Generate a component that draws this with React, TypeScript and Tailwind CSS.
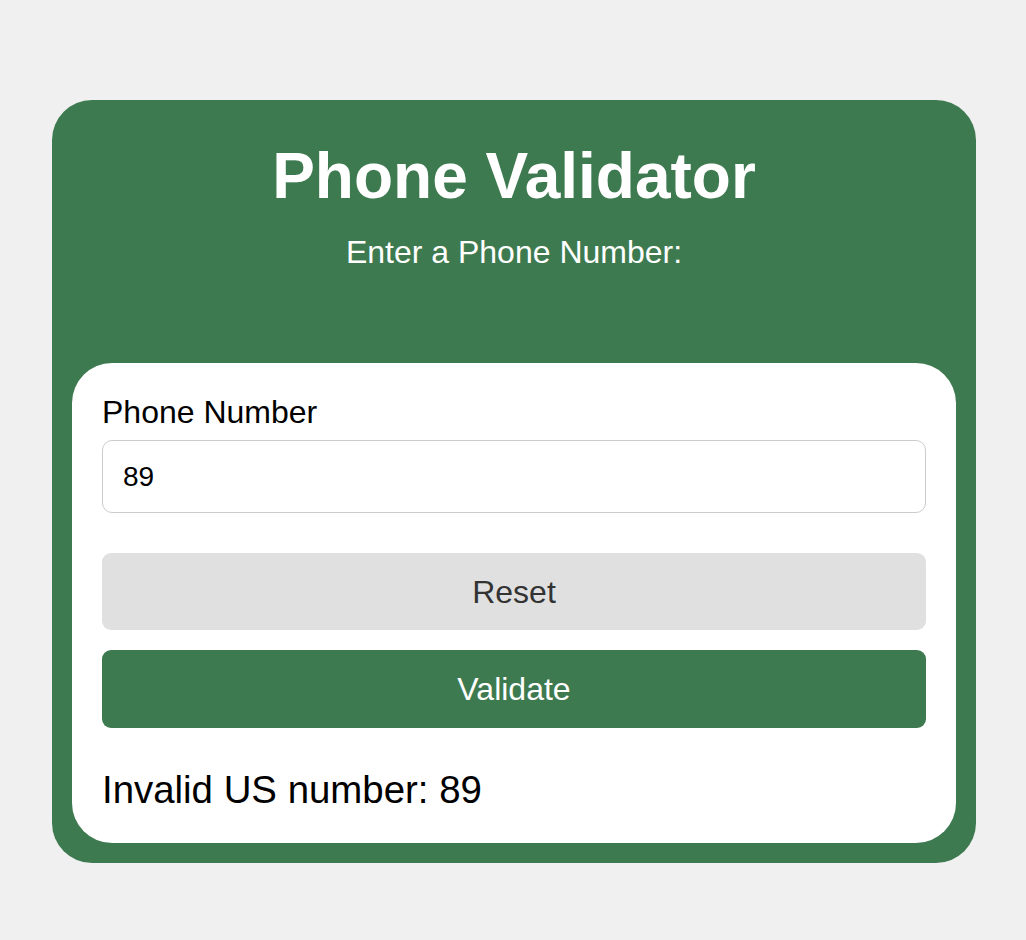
import React, { useState } from 'react';

const App: React.FC = () => {
  const [phone, setPhone] = useState('89');
  const [result, setResult] = useState('Invalid US number: 89');

  const validate = () => {
    const ok = /^(1\s?)?(\(\d{3}\)|\d{3})[\s-]?\d{3}[\s-]?\d{4}$/.test(phone);
    setResult(ok ? `Valid US number: ${phone}` : `Invalid US number: ${phone}`);
  };

  const reset = () => {
    setPhone('');
    setResult('');
  };

  return (
    <div className="min-h-[940px] bg-[#f0f0f0] pl-[52px] pt-[100px] font-['Liberation_Sans',Arial,sans-serif]">
      <div className="w-[924px] rounded-[40px] bg-[#3e7a50] px-5 pb-5 pt-[40px]">
        {/* header */}
        <h1 className="text-center text-[64px] font-bold leading-[72px] text-white">Phone Validator</h1>
        <p className="mt-[22px] text-center text-[32px] leading-[37px] text-white">Enter a Phone Number:</p>

        {/* form */}
        <div className="mt-[92px] rounded-[40px] bg-white px-[30px] pb-[31px] pt-[31px]">
          <label className="block text-[32px] leading-[37px] text-black">Phone Number</label>
          <input
            value={phone}
            onChange={(e) => setPhone(e.target.value)}
            className="mt-[9px] block h-[73px] w-full rounded-[10px] border border-[#cccccc] px-5 text-[28px] text-black outline-none"
          />
          <button
            onClick={reset}
            className="mt-[40px] block h-[77px] w-full rounded-[9px] bg-[#e0e0e0] text-[32px] text-[#333333]"
          >
            Reset
          </button>
          <button
            onClick={validate}
            className="mt-[20px] block h-[78px] w-full rounded-[9px] bg-[#3e7a50] text-[32px] text-white"
          >
            Validate
          </button>
          <div className="mt-[40px] min-h-[44px] text-[38.4px] leading-[44px] text-black">{result}</div>
        </div>
      </div>
    </div>
  );
};

export default App;
